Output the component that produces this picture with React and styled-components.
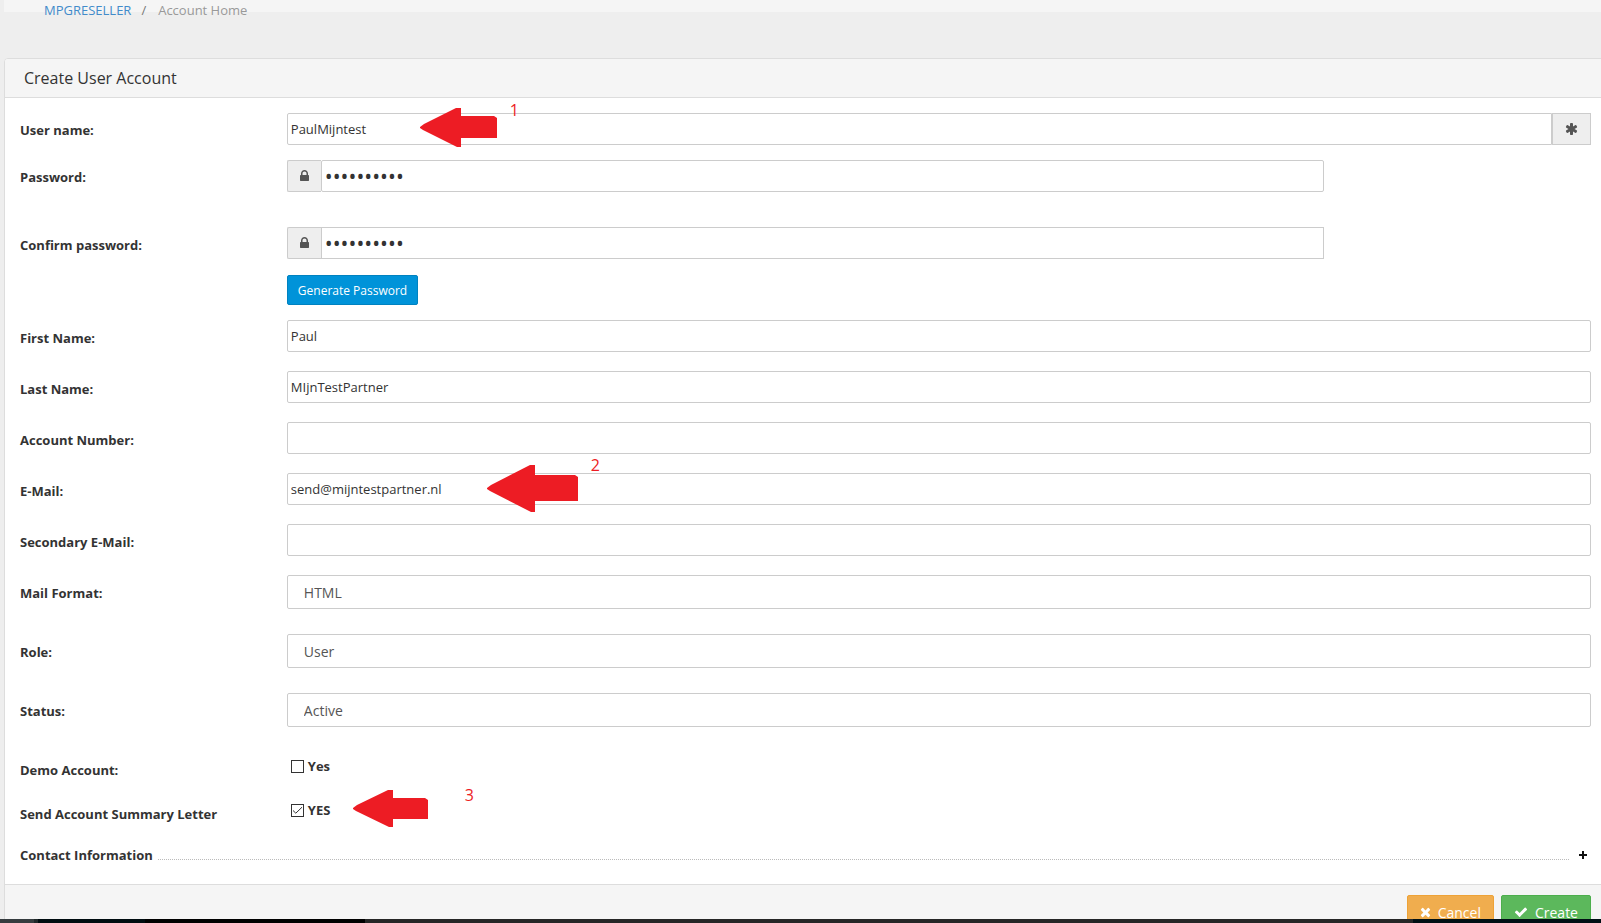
import React, { useState } from "react";
import styled, { createGlobalStyle } from "styled-components";

const GlobalStyle = createGlobalStyle`
  * {
    box-sizing: border-box;
  }
  body {
    margin: 0;
    background: #eeeeee;
    color: #333333;
    font: 13px/20px "Open Sans", sans-serif;
  }
  input, select, button {
    font-family: inherit;
  }
`;

const Page = styled.div`
  display: flex;
  flex-direction: column;
  height: 100vh;
  overflow: hidden;
`;

const Content = styled.main`
  flex: 1;
  min-height: 0;
  overflow: hidden;
  padding-left: 4px;
`;

const Breadcrumb = styled.nav`
  display: flex;
  align-items: flex-end;
  height: 12px;
  margin-bottom: 46px;
  padding-left: 40px;
  background: #f5f5f5;
  color: #999999;
  ol {
    display: flex;
    margin: 0 0 -8px;
    padding: 0;
    list-style: none;
  }
  li + li::before {
    content: "/";
    padding: 0 12px 0 10px;
    color: #777777;
  }
  a {
    color: #428bca;
    text-decoration: none;
  }
`;

// the panel runs on past the right edge of the window
const Panel = styled.section`
  margin-right: -6px;
  border: 1px solid #dddddd;
  border-radius: 4px;
  background: #ffffff;
`;

const PanelHeading = styled.header`
  padding: 9px 19px;
  border-bottom: 1px solid #dddddd;
  background: #f5f5f5;
  border-radius: 3px 3px 0 0;
  h1 {
    margin: 0;
    font-size: 16px;
    font-weight: normal;
    line-height: 20px;
  }
`;

const PanelBody = styled.div`
  padding: 15px 0 19px;
`;

const PanelFooter = styled.footer`
  display: flex;
  justify-content: flex-end;
  gap: 7px;
  padding: 10px 15px;
  border-top: 1px solid #dddddd;
  background: #f5f5f5;
`;

const FormRow = styled.div`
  display: flex;
  align-items: flex-start;
  margin-bottom: ${(props) => props.$gap || 19}px;
`;

const LabelCol = styled.div`
  flex: 0 0 calc(100% / 6);
  padding: ${(props) => props.$top || 8}px 15px 0;
  font-weight: bold;
`;

const FieldCol = styled.div`
  position: relative;
  flex: 0 0 ${(props) => (props.$narrow ? "calc(100% / 3 * 2)" : "calc(100% / 6 * 5)")};
  padding: 0 15px;
`;

const InputGroup = styled.div`
  display: flex;
`;

const TextInput = styled.input`
  flex: 1;
  width: 100%;
  min-width: 0;
  height: 32px;
  padding: 4px 3px;
  border: 1px solid #cccccc;
  border-radius: ${(props) => props.$radius || "2px"};
  background: #ffffff;
  color: #333333;
  font-size: 13px;
  outline: none;
  display: block;
`;

const PasswordInput = styled(TextInput)`
  padding: 0 3px;
  font-size: 21px;
`;

const Addon = styled.span`
  display: flex;
  align-items: center;
  justify-content: center;
  width: ${(props) => (props.$right ? 39 : 34)}px;
  border: 1px solid #cccccc;
  border-right-width: ${(props) => (props.$right ? 1 : 0)}px;
  border-radius: ${(props) => (props.$right ? "0" : "2px 0 0 2px")};
  background: #eeeeee;
  color: #555555;
`;

const Select = styled.select`
  display: block;
  width: 100%;
  height: 34px;
  padding: 4px 16px;
  border: 1px solid #cccccc;
  border-radius: 2px;
  background: #ffffff;
  color: #555555;
  font-size: 14px;
  appearance: none;
  outline: none;
`;

const CheckLabel = styled.label`
  display: flex;
  align-items: center;
  gap: 4px;
  width: fit-content;
  padding-left: 4px;
  font-weight: bold;
`;

const CheckBox = styled.span`
  display: grid;
  width: 13px;
  height: 13px;
  input,
  svg {
    grid-area: 1 / 1;
    width: 13px;
    height: 13px;
    margin: 0;
  }
  input {
    appearance: none;
    border: 1px solid #333333;
    background: #ffffff;
  }
  svg {
    pointer-events: none;
  }
`;

const Button = styled.button`
  display: inline-flex;
  align-items: center;
  gap: 7px;
  height: 34px;
  padding: 0 12px;
  border: 1px solid ${(props) => props.$border};
  border-radius: 2px;
  background: ${(props) => props.$color};
  color: #ffffff;
  font-size: 14px;
`;

const SmallButton = styled(Button)`
  height: 30px;
  padding: 0 10px;
  font-size: 12px;
`;

const SectionToggle = styled.button`
  display: flex;
  align-items: center;
  width: 100%;
  padding: 0 19px 0 15px;
  border: 0;
  background: none;
  color: #333333;
  font-size: 13px;
  font-weight: bold;
  line-height: 20px;
  text-align: left;
  svg {
    color: #111111;
  }
`;

const DottedLine = styled.span`
  flex: 1;
  height: 9px;
  margin: 0 10px 0 5px;
  border-bottom: 1px dotted #bbbbbb;
`;

const Marker = styled.div`
  position: absolute;
  left: ${(props) => props.$left}px;
  top: ${(props) => props.$top}px;
  display: flex;
  align-items: flex-start;
  gap: ${(props) => props.$gap}px;
  color: #ed1c24;
  font-size: 16px;
  line-height: 20px;
  pointer-events: none;
  svg {
    display: block;
    margin-top: ${(props) => props.$drop}px;
  }
`;

const Taskbar = styled.div`
  display: flex;
  flex: 0 0 4px;
  background: #262626;
`;

const TaskbarItem = styled.span`
  width: ${(props) => props.$width};
  margin-left: ${(props) => (props.$last ? "auto" : "0")};
  background: ${(props) => props.$color};
`;

const icons = {
  lock: {
    box: "320 0 1152 1792",
    width: 9,
    path: "M640 768h512v-192q0-106-75-181t-181-75-181 75-75 181v192zm832 96v576q0 40-28 68t-68 28h-960q-40 0-68-28t-28-68v-576q0-40 28-68t68-28h32v-192q0-184 132-316t316-132 316 132 132 316v192h32q40 0 68 28t28 68z",
  },
  asterisk: {
    box: "64 0 1664 1792",
    width: 13,
    path: "M1546 1050q46 26 59.5 77.5t-12.5 97.5l-64 110q-26 46-77.5 59.5t-97.5-12.5l-266-153v307q0 52-38 90t-90 38h-128q-52 0-90-38t-38-90v-307l-266 153q-46 26-97.5 12.5t-77.5-59.5l-64-110q-26-46-12.5-97.5t59.5-77.5l266-154-266-154q-46-26-59.5-77.5t12.5-97.5l64-110q26-46 77.5-59.5t97.5 12.5l266 153v-307q0-52 38-90t90-38h128q52 0 90 38t38 90v307l266-153q46-26 97.5-12.5t77.5 59.5l64 110q26 46 12.5 97.5t-59.5 77.5l-266 154z",
  },
  times: {
    box: "192 0 1408 1792",
    width: 11,
    path: "M1490 1322q0 40-28 68l-136 136q-28 28-68 28t-68-28l-294-294-294 294q-28 28-68 28t-68-28l-136-136q-28-28-28-68t28-68l294-294-294-294q-28-28-28-68t28-68l136-136q28-28 68-28t68 28l294 294 294-294q28-28 68-28t68 28l136 136q28 28 28 68t-28 68l-294 294 294 294q28 28 28 68z",
  },
  check: {
    box: "0 0 1792 1792",
    width: 14,
    path: "M1671 566q0 40-28 68l-724 724-136 136q-28 28-68 28t-68-28l-136-136-362-362q-28-28-28-68t28-68l136-136q28-28 68-28t68 28l294 295 656-657q28-28 68-28t68 28l136 136q28 28 28 68z",
  },
};

function Icon({ name }) {
  const icon = icons[name];
  return (
    <svg
      width={icon.width}
      height="14"
      viewBox={icon.box}
      fill="currentColor"
      overflow="visible"
      aria-hidden="true"
    >
      <path d={icon.path} />
    </svg>
  );
}

function Arrow({ width, height, head, bar, offset }) {
  const mid = Math.round(height / 2);
  return (
    <svg width={width} height={height} fill="#ed1c24" aria-hidden="true">
      <path
        d={`M0 ${mid - 1} L4 ${mid - 4} L${head - 5} 0 H${head} V${offset} H${width - 3} L${width} ${offset + 2} V${offset + bar} H${head} V${height} H${head - 4} L3 ${mid + 2} L0 ${mid} Z`}
      />
    </svg>
  );
}

function TextRow({ id, label, defaultValue, children }) {
  return (
    <FormRow>
      <LabelCol>
        <label htmlFor={id}>{label}</label>
      </LabelCol>
      <FieldCol>
        <TextInput id={id} type="text" defaultValue={defaultValue} />
        {children}
      </FieldCol>
    </FormRow>
  );
}

function PasswordRow({ id, label, gap, radius, top }) {
  return (
    <FormRow $gap={gap}>
      <LabelCol $top={top}>
        <label htmlFor={id}>{label}</label>
      </LabelCol>
      <FieldCol $narrow>
        <InputGroup>
          <Addon>
            <Icon name="lock" />
          </Addon>
          <PasswordInput id={id} type="password" defaultValue="mijntest10" $radius={radius} />
        </InputGroup>
      </FieldCol>
    </FormRow>
  );
}

function SelectRow({ id, label, options, gap = 25 }) {
  return (
    <FormRow $gap={gap}>
      <LabelCol>
        <label htmlFor={id}>{label}</label>
      </LabelCol>
      <FieldCol>
        <Select id={id}>
          {options.map((item) => (
            <option key={item}>{item}</option>
          ))}
        </Select>
      </FieldCol>
    </FormRow>
  );
}

function CheckRow({ id, label, text, initial, gap, children }) {
  const [checked, setChecked] = useState(initial);
  return (
    <FormRow $gap={gap}>
      <LabelCol $top={4}>{label}</LabelCol>
      <FieldCol>
        <CheckLabel htmlFor={id}>
          <CheckBox>
            <input
              id={id}
              type="checkbox"
              checked={checked}
              onChange={(e) => setChecked(e.target.checked)}
            />
            {checked && (
              <svg viewBox="0 0 13 13" fill="none" stroke="#333333" aria-hidden="true">
                <path d="M2 6.5 L4.8 9.2 L11 3.2" />
              </svg>
            )}
          </CheckBox>
          {text}
        </CheckLabel>
        {children}
      </FieldCol>
    </FormRow>
  );
}

export default function App() {
  return (
    <Page>
      <GlobalStyle />
      <Content>
        <Breadcrumb>
          <ol>
            <li>
              <a href="#home">MPGRESELLER</a>
            </li>
            <li>Account Home</li>
          </ol>
        </Breadcrumb>
        <Panel>
          <PanelHeading>
            <h1>Create User Account</h1>
          </PanelHeading>
          <PanelBody>
            <FormRow $gap={15}>
              <LabelCol $top={7}>
                <label htmlFor="username">User name:</label>
              </LabelCol>
              <FieldCol>
                <InputGroup>
                  <TextInput id="username" defaultValue="PaulMijntest" $radius="2px 0 0 2px" />
                  <Addon $right>
                    <Icon name="asterisk" />
                  </Addon>
                </InputGroup>
                <Marker $left={148} $top={-13} $gap={13} $drop={8}>
                  <Arrow width={77} height={39} head={41} bar={22} offset={8} />
                  1
                </Marker>
              </FieldCol>
            </FormRow>
            <PasswordRow id="password" label="Password:" gap={35} top={7} />
            <PasswordRow id="confirm" label="Confirm password:" gap={16} radius="0" />
            <FormRow $gap={15}>
              <LabelCol />
              <FieldCol>
                <SmallButton type="button" $color="#0093d9" $border="#0082c0">
                  Generate Password
                </SmallButton>
              </FieldCol>
            </FormRow>
            <TextRow id="first" label="First Name:" defaultValue="Paul" />
            <TextRow id="last" label="Last Name:" defaultValue="MIjnTestPartner" />
            <TextRow id="account" label="Account Number:" />
            <TextRow id="email" label="E-Mail:" defaultValue="send@mijntestpartner.nl">
              <Marker $left={215} $top={-18} $gap={13} $drop={10}>
                <Arrow width={91} height={47} head={48} bar={26} offset={10} />
                2
              </Marker>
            </TextRow>
            <TextRow id="email2" label="Secondary E-Mail:" />
            <SelectRow id="format" label="Mail Format:" options={["HTML", "Text"]} />
            <SelectRow id="role" label="Role:" options={["User", "Reseller"]} />
            <SelectRow id="status" label="Status:" options={["Active", "Suspended"]} gap={29} />
            <CheckRow id="demo" label="Demo Account:" text="Yes" initial={false} gap={20} />
            <CheckRow
              id="summary"
              label="Send Account Summary Letter"
              text="YES"
              initial={true}
              gap={21}
            >
              <Marker $left={81} $top={-15} $gap={37} $drop={5}>
                <Arrow width={75} height={37} head={40} bar={21} offset={8} />
                3
              </Marker>
            </CheckRow>
            <SectionToggle type="button">
              Contact Information
              <DottedLine />
              <svg width="8" height="8" stroke="currentColor" strokeWidth="2" aria-hidden="true">
                <path d="M4 0 V8 M0 4 H8" />
              </svg>
            </SectionToggle>
          </PanelBody>
          <PanelFooter>
            <Button type="button" $color="#f0ad4e" $border="#eea236">
              <Icon name="times" />
              Cancel
            </Button>
            <Button type="button" $color="#5cb85c" $border="#4cae4c">
              <Icon name="check" />
              Create
            </Button>
          </PanelFooter>
        </Panel>
      </Content>
      <Taskbar>
        <TaskbarItem $width="34px" $color="#363c3f" />
        <TaskbarItem $width="4px" $color="#20282a" />
        <TaskbarItem $width="107px" $color="#000c10" />
        <TaskbarItem $width="220px" $color="#000000" />
        <TaskbarItem $width="188px" $color="#000f14" $last />
      </Taskbar>
    </Page>
  );
}
